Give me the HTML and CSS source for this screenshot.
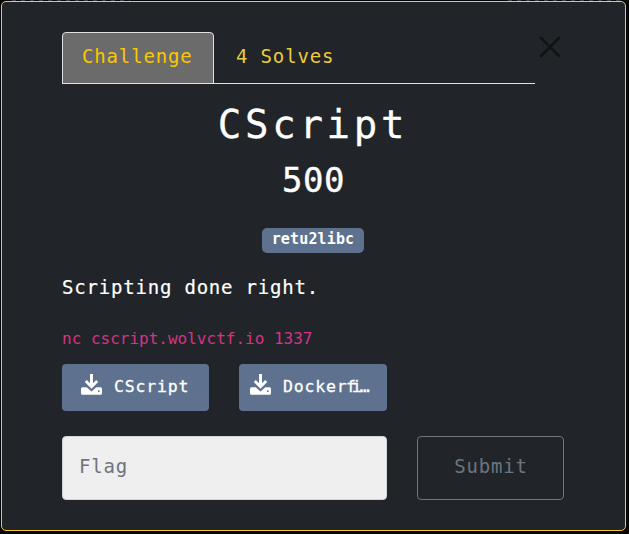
FILE: index.html
```html
<!DOCTYPE html>
<html lang="en">
<head>
<meta charset="utf-8">
<title>CScript</title>
<link rel="stylesheet" href="styles.css">
</head>
<body>
<main class="modal">
  <header class="top">
    <nav class="tabs">
      <a class="tab active">Challenge</a>
      <a class="tab">4 Solves</a>
    </nav>
    <button class="close" aria-label="Close">
      <svg viewBox="0 0 22 22" width="22" height="22"><path d="M2 2 20 20M20 2 2 20" fill="none" stroke="#111315" stroke-width="2.5" stroke-linecap="round"/></svg>
    </button>
  </header>
  <h2 class="name">CScript</h2>
  <h3 class="value">500</h3>
  <div class="tags"><span class="badge">retu2libc</span></div>
  <p class="desc">Scripting done right.</p>
  <code class="host">nc cscript.wolvctf.io 1337</code>
  <div class="files">
    <a class="file">
      <svg class="icon" viewBox="0 0 21 21" width="21" height="21"><path d="M9 0h3v9.2l3.2-3.1 2 2L10.500 14.800 3.800 8.100l2-2L9 9.200zM1.500 13.200h4.200l4.800 4.300 4.800-4.300h4.200q1.500 0 1.500 1.500v4.500q0 1.500-1.500 1.500h-18Q0 20.700 0 19.200v-4.500q0-1.500 1.500-1.500z" fill="#fff"/><circle cx="17.800" cy="17.200" r=".9" fill="#5e728f"/></svg>
      <span>CScript</span>
    </a>
    <a class="file second">
      <svg class="icon" viewBox="0 0 21 21" width="21" height="21"><path d="M9 0h3v9.200l3.200-3.100 2 2L10.500 14.800 3.800 8.100l2-2L9 9.200zM1.500 13.200h4.200l4.800 4.300 4.800-4.300h4.200q1.500 0 1.500 1.500v4.500q0 1.500-1.500 1.500h-18Q0 20.700 0 19.200v-4.500q0-1.500 1.500-1.500z" fill="#fff"/><circle cx="17.800" cy="17.200" r=".9" fill="#5e728f"/></svg>
      <span>Docker<span class="tight">fi</span>…</span>
    </a>
  </div>
  <form class="answer">
    <input class="flag" type="text" placeholder="Flag">
    <button class="submit" type="button">Submit</button>
  </form>
</main>
</body>
</html>
```
FILE: styles.css
```css
* { box-sizing: border-box; }
body {
  margin: 0;
  height: 534px;
  padding: 1px 3px 3px 1px;
  overflow: hidden;
  background:
    repeating-linear-gradient(90deg, #3a3d42 0 4px, #08090a 4px 9px) 12px 0 / 118px 1px no-repeat,
    repeating-linear-gradient(90deg, #3a3d42 0 4px, #08090a 4px 9px) 508px 0 / 114px 1px no-repeat,
    #050505;
  font-family: "DejaVu Sans Mono", monospace;
  color: #fff;
}
.modal {
  width: 625px;
  height: 530px;
  padding: 30px 61px 0 60px;
  background: #212529;
  border: 1px solid #f5c82f;
  border-radius: 5px;
}
.top { display: flex; width: 502px; height: 52px; }
.tabs {
  display: flex;
  width: 473px;
  height: 52px;
  border-bottom: 1px solid #dee2e6;
}
.tab {
  height: 52px;
  padding: 0 21px;
  border: 1px solid transparent;
  font-size: 19px;
  line-height: 47px;
  letter-spacing: 0.85px;
  white-space: nowrap;
  color: #edca3b;
}
.active {
  width: 152px;
  padding: 0 19px;
  background: #6b6b6b;
  border-color: #dee2e6;
  border-radius: 4px 4px 0 0;
  color: #fac800;
}
.close {
  margin: 4px 0 0 4px;
  padding: 0;
  width: 22px;
  height: 22px;
  border: 0;
  background: none;
}
.close svg { display: block; }
.name {
  margin: 16px 0 0;
  height: 50px;
  text-align: center;
  font-size: 39px;
  font-weight: 400;
  line-height: 50px;
  letter-spacing: 3.7px;
  -webkit-text-stroke: 0.3px #fff;
}
.value {
  margin: 9px 0 0;
  height: 44px;
  padding-left: 1px;
  text-align: center;
  font-size: 34px;
  font-weight: 400;
  line-height: 42px;
  letter-spacing: 0.6px;
  -webkit-text-stroke: 0.4px #fff;
}
.tags { display: flex; justify-content: center; margin-top: 25px; }
.badge {
  width: 102px;
  height: 25px;
  border-radius: 5px;
  background: #5e728f;
  text-align: center;
  font-size: 15px;
  font-weight: 700;
  line-height: 22px;
  letter-spacing: 0.15px;
}
.desc {
  margin: 21px 0 0;
  height: 28px;
  font-size: 19px;
  line-height: 26px;
  letter-spacing: 0.8px;
  -webkit-text-stroke: 0.2px #fff;
}
.host {
  display: block;
  margin-top: 26px;
  height: 24px;
  font-family: "DejaVu Sans Mono", monospace;
  font-size: 16px;
  line-height: 22px;
  color: #d63384;
}
.files { display: flex; gap: 30px; margin-top: 12px; }
.file {
  display: flex;
  gap: 12px;
  width: 147px;
  height: 47px;
  padding: 10px 0 0 19px;
  border-radius: 4px;
  background: #5e728f;
  font-size: 16.5px;
  line-height: 26px;
  letter-spacing: 0.8px;
  white-space: nowrap;
  -webkit-text-stroke: 0.3px #fff;
}
.second { width: 148px; padding-left: 11px; }
.icon { flex: none; }
.tight { margin-left: -1.5px; letter-spacing: -4px; margin-right: 2px; }
.answer { display: flex; gap: 30px; margin: 25px 0 0; }
.flag {
  width: 325px;
  height: 64px;
  padding: 0 16px 4px;
  border: 1px solid #ced4da;
  border-radius: 4px;
  background: #efefef;
  font: 19px "DejaVu Sans Mono", monospace;
  letter-spacing: 0.8px;
}
.flag::placeholder { color: #6c757d; opacity: 1; }
.submit {
  width: 147px;
  height: 64px;
  padding: 0 0 4px 1px;
  border: 1px solid #6c757d;
  border-radius: 4px;
  background: none;
  font: 19px "DejaVu Sans Mono", monospace;
  letter-spacing: 0.8px;
  color: #6c757d;
}
```
